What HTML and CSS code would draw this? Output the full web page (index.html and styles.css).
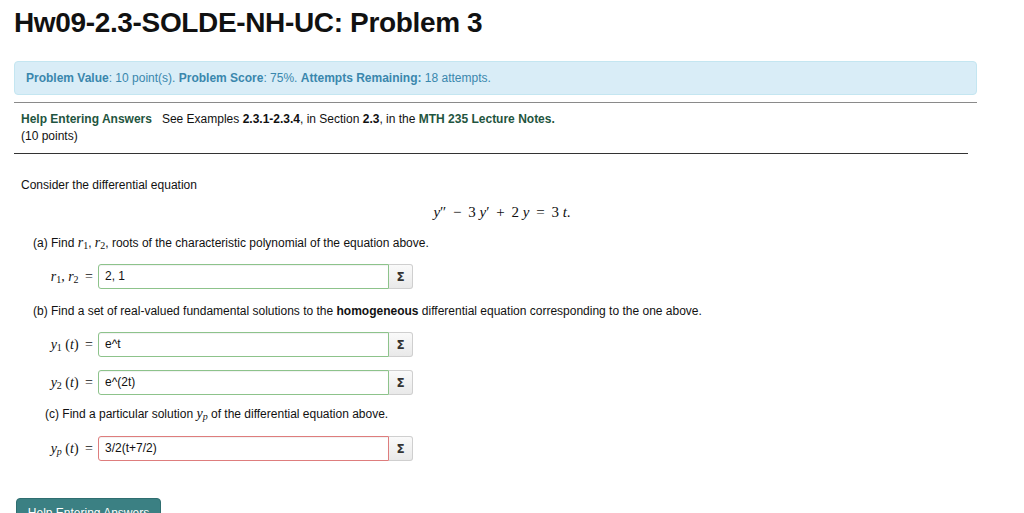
FILE: index.html
```html
<!DOCTYPE html>
<html lang="en">
<head>
<meta charset="utf-8">
<title>Hw09-2.3-SOLDE-NH-UC: Problem 3</title>
<link rel="stylesheet" href="styles.css">
</head>
<body>
<main class="page">
  <h1 class="title">Hw09-2.3-SOLDE-NH-UC: Problem 3</h1>

  <div class="info">
    <b>Problem Value</b>: 10 point(s). <b>Problem Score</b>: 75%. <b>Attempts Remaining:</b> 18 attempts.
  </div>

  <section class="problem">
    <div class="problem-head">
      <p><a class="link" href="#">Help Entering Answers</a><span class="gap"></span>See Examples <b>2.3.1-2.3.4</b>, in Section <b>2.3</b>, in the <a class="link" href="#">MTH 235 Lecture Notes.</a></p>
      <p>(10 points)</p>
    </div>

    <div class="problem-body">
      <p class="intro">Consider the differential equation</p>
      <p class="display"><i>y</i>″ <span class="op">&minus;</span> 3 <i>y</i>′ <span class="op">+</span> 2 <i>y</i> <span class="op">=</span> 3 <i>t</i>.</p>

      <p class="part part-a">(a) Find <span class="m"><i>r</i><sub>1</sub></span>, <span class="m"><i>r</i><sub>2</sub></span>, roots of the characteristic polynomial of the equation above.</p>
      <div class="answer answer-a">
        <span class="label m"><i>r</i><sub>1</sub>, <i>r</i><sub>2</sub> <span class="op">=</span></span>
        <span class="field ok">2, 1</span>
        <span class="sigma">&Sigma;</span>
      </div>

      <p class="part part-b">(b) Find a set of real-valued fundamental solutions to the <b>homogeneous</b> differential equation corresponding to the one above.</p>
      <div class="answer answer-b1">
        <span class="label m"><i>y</i><sub>1</sub> (<i>t</i>) <span class="op">=</span></span>
        <span class="field ok">e^t</span>
        <span class="sigma">&Sigma;</span>
      </div>
      <div class="answer answer-b2">
        <span class="label m"><i>y</i><sub>2</sub> (<i>t</i>) <span class="op">=</span></span>
        <span class="field ok">e^(2t)</span>
        <span class="sigma">&Sigma;</span>
      </div>

      <p class="part part-c">(c) Find a particular solution <span class="m"><i>y<sub>p</sub></i></span> of the differential equation above.</p>
      <div class="answer answer-c">
        <span class="label m"><i>y<sub>p</sub></i> (<i>t</i>) <span class="op">=</span></span>
        <span class="field bad">3/2(t+7/2)</span>
        <span class="sigma">&Sigma;</span>
      </div>
    </div>
  </section>

  <button class="help-btn" type="button">Help Entering Answers</button>
</main>
</body>
</html>
```

FILE: styles.css
```css
html, body {
  margin: 0;
  padding: 0;
  background: #fff;
}

body {
  font-family: "Liberation Sans", Arial, Helvetica, sans-serif;
  font-size: 12px;
  color: #111;
  overflow: hidden;
}

.page {
  padding: 0 0 0 14px;
  width: 963px;
}

p {
  margin: 0;
}

.title {
  margin: 0;
  padding-top: 6px;
  font-size: 28px;
  line-height: 33px;
  font-weight: bold;
  color: #111;
  letter-spacing: -0.35px;
}

.info {
  margin-top: 22px;
  box-sizing: border-box;
  height: 34px;
  padding: 0 11px;
  line-height: 32px;
  background: #d9edf7;
  border: 1px solid #c4e6f1;
  border-radius: 4px;
  color: #3a87ad;
  font-size: 12px;
}

.problem {
  margin-top: 7px;
}

.problem-head {
  border-top: 1px solid #8a8a8a;
  width: 963px;
  padding: 8px 0 0 7px;
  box-sizing: border-box;
  line-height: 17px;
}

.problem-head::after {
  content: "";
  display: block;
  margin: 8px 0 0 -7px;
  width: 954px;
  border-bottom: 1px solid #333;
}

.link {
  color: #1f5540;
  font-weight: bold;
  text-decoration: none;
}

.gap {
  display: inline-block;
  width: 10px;
}

.problem-body {
  padding: 0 0 0 7px;
}

.intro {
  margin-top: 24px;
  line-height: 14px;
}

.display {
  margin-top: 12px;
  width: 962px;
  text-align: center;
  font-family: "Liberation Serif", "Times New Roman", serif;
  font-size: 15px;
  line-height: 16px;
}

.display .op,
.label .op {
  padding: 0 3px;
}

.m {
  font-family: "Liberation Serif", "Times New Roman", serif;
  font-size: 14px;
}

sub {
  font-size: 10px;
  line-height: 0;
  vertical-align: -2px;
}

.part {
  padding-left: 12px;
  line-height: 16px;
}

.part-a {
  margin-top: 15px;
}

.part-b {
  margin-top: 14px;
}

.part-c {
  padding-left: 24px;
  margin-top: 11px;
}

.answer {
  display: flex;
  align-items: center;
  height: 25px;
}

.answer-a {
  margin-top: 13px;
}

.answer-b1 {
  margin-top: 13px;
}

.answer-b2 {
  margin-top: 13px;
}

.answer-c {
  margin-top: 14px;
}

.label {
  width: 72px;
  text-align: right;
  padding-right: 5px;
  white-space: nowrap;
}

.label .op {
  padding-right: 0;
}

.field {
  box-sizing: border-box;
  width: 291px;
  height: 25px;
  line-height: 23px;
  padding: 0 6px;
  border: 1px solid #8dc38b;
  border-radius: 3px 0 0 3px;
  font-size: 12px;
  color: #111;
  background: #fff;
  box-shadow: inset 0 1px 1px rgba(0, 0, 0, 0.06);
}

.field.bad {
  border-color: #de7d7d;
}

.sigma {
  box-sizing: border-box;
  width: 24px;
  height: 25px;
  display: flex;
  align-items: center;
  justify-content: center;
  border: 1px solid #cfcfcf;
  border-left: none;
  border-radius: 0 3px 3px 0;
  background: linear-gradient(#fafafa, #e9e9e9);
  font-family: "DejaVu Sans", sans-serif;
  font-weight: bold;
  font-size: 12px;
  color: #333;
}

.help-btn {
  display: block;
  margin: 37px 0 0 2px;
  width: 145px;
  height: 26px;
  padding: 3px 0 0;
  border: 1px solid #2f6e70;
  border-radius: 4px;
  background: #3b8083;
  color: #fff;
  font-family: "Liberation Sans", Arial, sans-serif;
  font-size: 12px;
  text-align: center;
  line-height: 16px;
}
```
